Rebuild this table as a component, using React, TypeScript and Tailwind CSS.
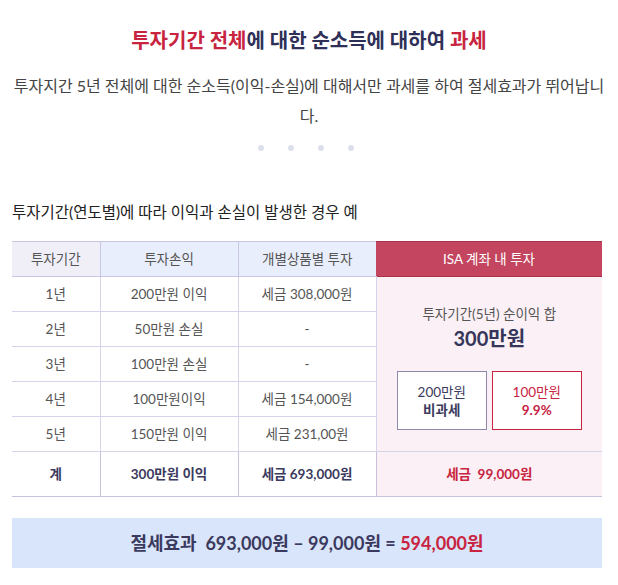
const font = { fontFamily: "Lato, 'Noto Sans CJK KR', sans-serif" };

const rows = [
  { year: "1년", pl: "200만원 이익", tax: "세금 308,000원" },
  { year: "2년", pl: "50만원 손실", tax: "-" },
  { year: "3년", pl: "100만원 손실", tax: "-" },
  { year: "4년", pl: "100만원이익", tax: "세금 154,000원" },
  { year: "5년", pl: "150만원 이익", tax: "세금 231,00원" },
];

const App = () => {
  return (
    <div className="w-[618px] h-[585px] bg-white overflow-hidden" style={font}>
      <section className="pt-[26px] text-center">
        <h2 className="text-[20px] font-bold leading-[28px] text-[#2f3058]">
          <span className="text-[#c8243f]">투자기간 전체</span>에 대한 순소득에 대하여{" "}
          <span className="text-[#c8243f]">과세</span>
        </h2>
        <p className="mt-[17px] px-[12px] text-[16px] leading-[30px] text-[#444]">
          투자지간 5년 전체에 대한 순소득(이익-손실)에 대해서만 과세를 하여 절세효과가 뛰어납니다.
        </p>
        <div className="flex justify-center gap-[24px] mt-[14px] pr-[6px]">
          <span className="w-[6px] h-[6px] rounded-full bg-[#dcdfec]" />
          <span className="w-[6px] h-[6px] rounded-full bg-[#dcdfec]" />
          <span className="w-[6px] h-[6px] rounded-full bg-[#dcdfec]" />
          <span className="w-[6px] h-[6px] rounded-full bg-[#dcdfec]" />
        </div>
      </section>

      <section className="pl-[12px] pr-[16px] mt-[51px]">
        <h3 className="text-[15.5px] leading-[20px] text-[#222]">
          투자기간(연도별)에 따라 이익과 손실이 발생한 경우 예
        </h3>

        <table className="mt-[19px] w-full border-collapse text-[13.5px] text-[#555] text-center table-fixed">
          <colgroup>
            <col className="w-[88px]" />
            <col className="w-[138px]" />
            <col className="w-[138px]" />
            <col />
          </colgroup>
          <thead>
            <tr className="h-[35px]">
              <th className="font-normal bg-[#f0eff8] border-t border-b border-r border-[#c9c5e2]">투자기간</th>
              <th className="font-normal bg-[#e9eefc] border-t border-b border-r border-[#c9c5e2]">투자손익</th>
              <th className="font-normal bg-[#e9eefc] border-t border-b border-[#c9c5e2]">개별상품별 투자</th>
              <th className="font-normal bg-[#c4455f] text-white border-t border-b border-[#a8304a]">ISA 계좌 내 투자</th>
            </tr>
          </thead>
          <tbody>
            {rows.map((r, i) => (
              <tr key={r.year} className="h-[35px]">
                <td className="border-b border-r border-[#d6d3ea]">{r.year}</td>
                <td className="border-b border-r border-[#d6d3ea]">{r.pl}</td>
                <td className="border-b border-r border-[#d6d3ea]">{r.tax}</td>
                {i === 0 && (
                  <td rowSpan={5} className="bg-[#fbf0f5] border-b border-[#d6d3ea] align-top">
                    <div className="pt-[27px] flex flex-col items-center">
                      <span className="text-[13.5px] leading-[20px] text-[#555]">투자기간(5년) 순이익 합</span>
                      <span className="text-[20px] leading-[28px] font-bold text-[#353659]">300만원</span>
                      <div className="flex gap-[5px] mt-[19px]">
                        <div className="w-[90px] h-[59px] bg-white border border-[#8c89aa] flex flex-col items-center justify-center leading-[18px] text-[#3b3a5e]">
                          <span>200만원</span>
                          <span className="font-bold">비과세</span>
                        </div>
                        <div className="w-[90px] h-[59px] bg-white border border-[#c8243f] flex flex-col items-center justify-center leading-[18px] text-[#c8243f]">
                          <span>100만원</span>
                          <span className="font-bold">9.9%</span>
                        </div>
                      </div>
                    </div>
                  </td>
                )}
              </tr>
            ))}
            <tr className="h-[45px] font-bold text-[#3b3a5e]">
              <td className="border-b border-r border-[#c9c0dc]">계</td>
              <td className="border-b border-r border-[#c9c0dc]">300만원 이익</td>
              <td className="border-b border-r border-[#c9c0dc]">세금 693,000원</td>
              <td className="bg-[#fbf0f5] border-b border-[#c9c0dc] text-[#c8243f]">세금&nbsp; 99,000원</td>
            </tr>
          </tbody>
        </table>

        <div className="mt-[21px] h-[50px] bg-[#d9e5fb] flex items-center justify-center text-[18px] font-bold text-[#3b3a5e]">
          <span>
            절세효과&nbsp; 693,000원 – 99,000원 = <span className="text-[#c8243f]">594,000원</span>
          </span>
        </div>
      </section>
    </div>
  );
};

export default App;
